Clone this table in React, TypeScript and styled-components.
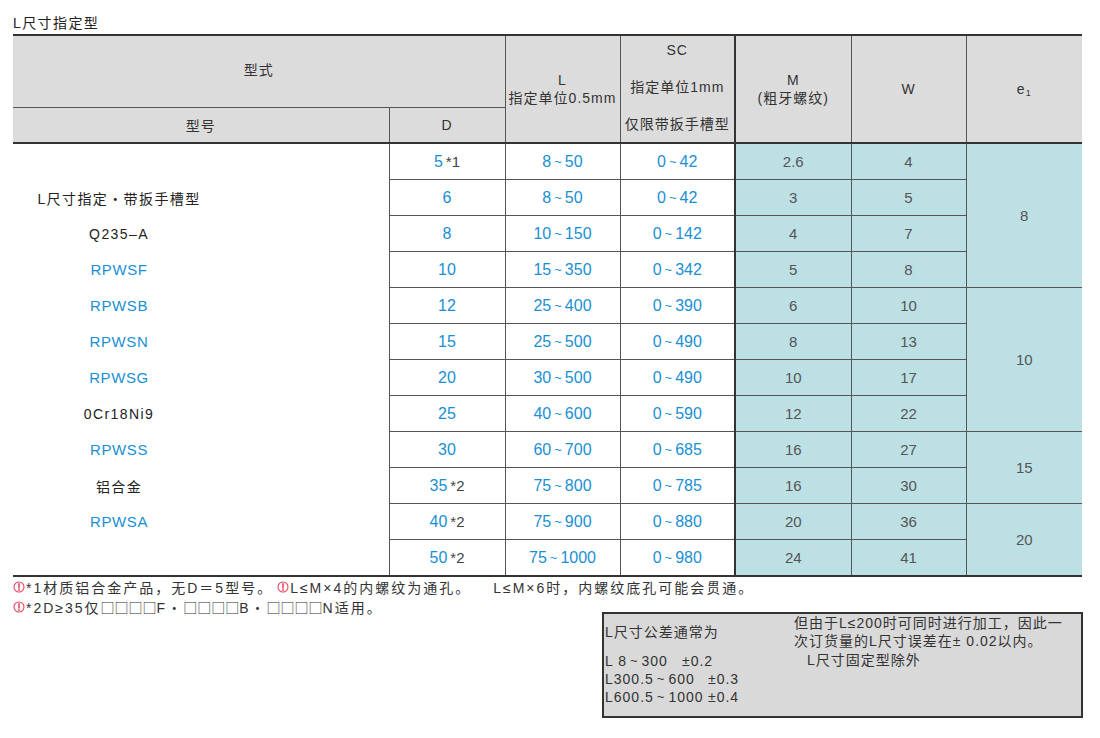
import React from "react";
import styled, { createGlobalStyle } from "styled-components";

const GlobalStyle = createGlobalStyle`
  body {
    margin: 0;
    background: #ffffff;
    font-family: "Liberation Sans", "Noto Sans CJK SC", sans-serif;
    color: #333333;
  }
`;

const Page = styled.div`
  padding: 13px 0 0 13px;
  width: 1087px;
`;

const Title = styled.div`
  height: 21px;
  font-size: 14px;
  line-height: 20px;
  letter-spacing: 1.4px;
  color: #222;
`;

const Table = styled.table`
  border-collapse: collapse;
  table-layout: fixed;
  width: 1069px;
  border-top: 2px solid #333;
  border-bottom: 2px solid #333;
`;

const HeadCell = styled.th<{ $thickLeft?: boolean; $thinBottom?: boolean; $last?: boolean }>`
  background: #dcdcdc;
  font-weight: normal;
  font-size: 14px;
  letter-spacing: 1px;
  color: #333;
  text-align: center;
  vertical-align: middle;
  padding: 0;
  border-right: ${(p) => (p.$last ? "none" : "1px solid #555")};
  border-left: ${(p) => (p.$thickLeft ? "2px solid #333" : "none")};
  border-bottom: ${(p) => (p.$thinBottom ? "1px solid #555" : "2px solid #333")};
`;

const GroupTitle = styled.div`
  padding-bottom: 6px;
`;

const HeadLine = styled.div`
  line-height: 18px;
`;

const HeadStack = styled.div`
  display: flex;
  flex-direction: column;
  justify-content: space-between;
  height: 106px;
  padding: 0 0 4px;
  box-sizing: border-box;
  line-height: 28px;
`;

const Sub = styled.sub`
  font-size: 9px;
  vertical-align: -2px;
`;

const Row = styled.tr`
  height: 36px;
`;

const LabelCell = styled.td`
  padding: 0;
  border: none;
  border-right: 1px solid #555;
`;

const Label = styled.div<{ $blue?: boolean }>`
  width: 212px;
  text-align: center;
  font-size: ${(p) => (p.$blue ? "15px" : "14px")};
  letter-spacing: ${(p) => (p.$blue ? "0.6px" : "1.4px")};
  color: ${(p) => (p.$blue ? "#1a8fd4" : "#222")};
`;

const Cell = styled.td<{ $tint?: boolean; $thickLeft?: boolean; $last?: boolean }>`
  padding: 0;
  height: 35px;
  text-align: center;
  vertical-align: middle;
  font-size: ${(p) => (p.$tint ? "15px" : "16px")};
  color: ${(p) => (p.$tint ? "#555" : "#1a8fd4")};
  background: ${(p) => (p.$tint ? "#bde0e5" : "#ffffff")};
  border-bottom: 1px solid #555;
  border-right: ${(p) => (p.$last ? "none" : "1px solid #555")};
  border-left: ${(p) => (p.$thickLeft ? "2px solid #333" : "none")};
`;

const Star = styled.span`
  color: #444;
  font-size: 15px;
  margin-left: 3px;
`;

const Tilde = styled.span`
  display: inline-block;
  font-size: 13px;
  margin: 0 3px;
  vertical-align: 1px;
`;

const Notes = styled.div`
  height: 35px;
  font-size: 14px;
  letter-spacing: 2px;
  color: #333;
`;

const NoteLine = styled.div`
  display: flex;
  align-items: center;
  height: 20px;
  white-space: nowrap;
`;

const NoteGap = styled.span<{ $w: number }>`
  display: inline-block;
  width: ${(p) => p.$w}px;
`;

const Boxes = styled.span`
  font-family: "Noto Sans CJK SC", sans-serif;
  letter-spacing: 0;
  font-size: 14px;
`;

const Warn = styled.svg`
  width: 12px;
  height: 12px;
  margin-right: 1px;
  flex: none;
`;

const NoteBox = styled.div`
  margin-left: 589px;
  width: 481px;
  height: 106px;
  box-sizing: border-box;
  border: 2px solid #333;
  background: #d9d9d9;
  display: flex;
  font-size: 14px;
  letter-spacing: 1px;
  color: #333;
`;

const BoxLeft = styled.div`
  width: 189px;
  padding: 9px 0 0 1px;
`;

const BoxRight = styled.div`
  flex: 1;
  line-height: 18px;
`;

const BoxHead = styled.div`
  line-height: 18px;
  margin-bottom: 11px;
`;

const BoxLine = styled.div`
  line-height: 18px;
`;

const Indent = styled.div`
  padding-left: 13px;
  line-height: 20px;
`;

const Pm = styled.span<{ $w: number }>`
  display: inline-block;
  width: ${(p) => p.$w}px;
`;

type RowData = {
  label: string;
  blue?: boolean;
  d: string;
  star?: string;
  l: [string, string];
  sc: [string, string];
  m: string;
  w: string;
};

const rows: RowData[] = [
  { label: "", d: "5", star: "*1", l: ["8", "50"], sc: ["0", "42"], m: "2.6", w: "4" },
  { label: "L尺寸指定・带扳手槽型", d: "6", l: ["8", "50"], sc: ["0", "42"], m: "3", w: "5" },
  { label: "Q235–A", d: "8", l: ["10", "150"], sc: ["0", "142"], m: "4", w: "7" },
  { label: "RPWSF", blue: true, d: "10", l: ["15", "350"], sc: ["0", "342"], m: "5", w: "8" },
  { label: "RPWSB", blue: true, d: "12", l: ["25", "400"], sc: ["0", "390"], m: "6", w: "10" },
  { label: "RPWSN", blue: true, d: "15", l: ["25", "500"], sc: ["0", "490"], m: "8", w: "13" },
  { label: "RPWSG", blue: true, d: "20", l: ["30", "500"], sc: ["0", "490"], m: "10", w: "17" },
  { label: "0Cr18Ni9", d: "25", l: ["40", "600"], sc: ["0", "590"], m: "12", w: "22" },
  { label: "RPWSS", blue: true, d: "30", l: ["60", "700"], sc: ["0", "685"], m: "16", w: "27" },
  { label: "铝合金", d: "35", star: "*2", l: ["75", "800"], sc: ["0", "785"], m: "16", w: "30" },
  { label: "RPWSA", blue: true, d: "40", star: "*2", l: ["75", "900"], sc: ["0", "880"], m: "20", w: "36" },
  { label: "", d: "50", star: "*2", l: ["75", "1000"], sc: ["0", "980"], m: "24", w: "41" },
];

// e1 merged groups: start row -> [span, value]
const e1Groups: Record<number, [number, string]> = {
  0: [4, "8"],
  4: [4, "10"],
  8: [2, "15"],
  10: [2, "20"],
};

function Range({ v }: { v: [string, string] }) {
  return (
    <>
      {v[0]}
      <Tilde>~</Tilde>
      {v[1]}
    </>
  );
}

function WarnIcon() {
  return (
    <Warn viewBox="0 0 12 12">
      <circle cx="6" cy="6" r="5" fill="none" stroke="#e6455e" strokeWidth="1.1" />
      <path d="M6 2.8 L6 7" stroke="#e6455e" strokeWidth="1.6" strokeLinecap="round" />
      <circle cx="6" cy="9" r="0.9" fill="#e6455e" />
    </Warn>
  );
}

export default function App() {
  return (
    <Page>
      <GlobalStyle />
      <Title>L尺寸指定型</Title>
      <Table>
        <colgroup>
          <col style={{ width: 376 }} />
          <col style={{ width: 116 }} />
          <col style={{ width: 115 }} />
          <col style={{ width: 115 }} />
          <col style={{ width: 116 }} />
          <col style={{ width: 115 }} />
          <col style={{ width: 116 }} />
        </colgroup>
        <thead>
          <tr style={{ height: 72 }}>
            <HeadCell colSpan={2} $thinBottom>
              <GroupTitle>型式</GroupTitle>
            </HeadCell>
            <HeadCell rowSpan={2}>
              <HeadLine>L</HeadLine>
              <HeadLine>指定单位0.5mm</HeadLine>
            </HeadCell>
            <HeadCell rowSpan={2}>
              <HeadStack>
                <div>SC</div>
                <div>指定单位1mm</div>
                <div>仅限带扳手槽型</div>
              </HeadStack>
            </HeadCell>
            <HeadCell rowSpan={2} $thickLeft>
              <HeadLine>M</HeadLine>
              <HeadLine>(粗牙螺纹)</HeadLine>
            </HeadCell>
            <HeadCell rowSpan={2}>W</HeadCell>
            <HeadCell rowSpan={2} $last>
              e<Sub>1</Sub>
            </HeadCell>
          </tr>
          <tr style={{ height: 35 }}>
            <HeadCell>型号</HeadCell>
            <HeadCell>D</HeadCell>
          </tr>
        </thead>
        <tbody>
          {rows.map((r, i) => (
            <Row key={i}>
              <LabelCell>
                <Label $blue={r.blue}>{r.label}</Label>
              </LabelCell>
              <Cell>
                {r.d}
                {r.star && <Star>{r.star}</Star>}
              </Cell>
              <Cell>
                <Range v={r.l} />
              </Cell>
              <Cell>
                <Range v={r.sc} />
              </Cell>
              <Cell $tint $thickLeft>
                {r.m}
              </Cell>
              <Cell $tint>{r.w}</Cell>
              {e1Groups[i] && (
                <Cell $tint $last rowSpan={e1Groups[i][0]}>
                  {e1Groups[i][1]}
                </Cell>
              )}
            </Row>
          ))}
        </tbody>
      </Table>
      <Notes>
        <NoteLine>
          <WarnIcon />
          *1材质铝合金产品，无D＝5型号。
          <NoteGap $w={4} />
          <WarnIcon />
          L≤M×4的内螺纹为通孔。
          <NoteGap $w={22} />
          L≤M×6时，内螺纹底孔可能会贯通。
        </NoteLine>
        <NoteLine>
          <WarnIcon />
          *2D≥35仅<Boxes>□□□□</Boxes>F・<Boxes>□□□□</Boxes>B・<Boxes>□□□□</Boxes>N适用。
        </NoteLine>
      </Notes>
      <NoteBox>
        <BoxLeft>
          <BoxHead>L尺寸公差通常为</BoxHead>
          <BoxLine>
            <Pm $w={77}>
              L 8<Tilde>~</Tilde>300
            </Pm>
            ±0.2
          </BoxLine>
          <BoxLine>
            <Pm $w={103}>
              L300.5<Tilde>~</Tilde>600
            </Pm>
            ±0.3
          </BoxLine>
          <BoxLine>
            <Pm $w={103}>
              L600.5<Tilde>~</Tilde>1000
            </Pm>
            ±0.4
          </BoxLine>
        </BoxLeft>
        <BoxRight>
          <div>但由于L≤200时可同时进行加工，因此一</div>
          <div>次订货量的L尺寸误差在± 0.02以内。</div>
          <Indent>L尺寸固定型除外</Indent>
        </BoxRight>
      </NoteBox>
    </Page>
  );
}
